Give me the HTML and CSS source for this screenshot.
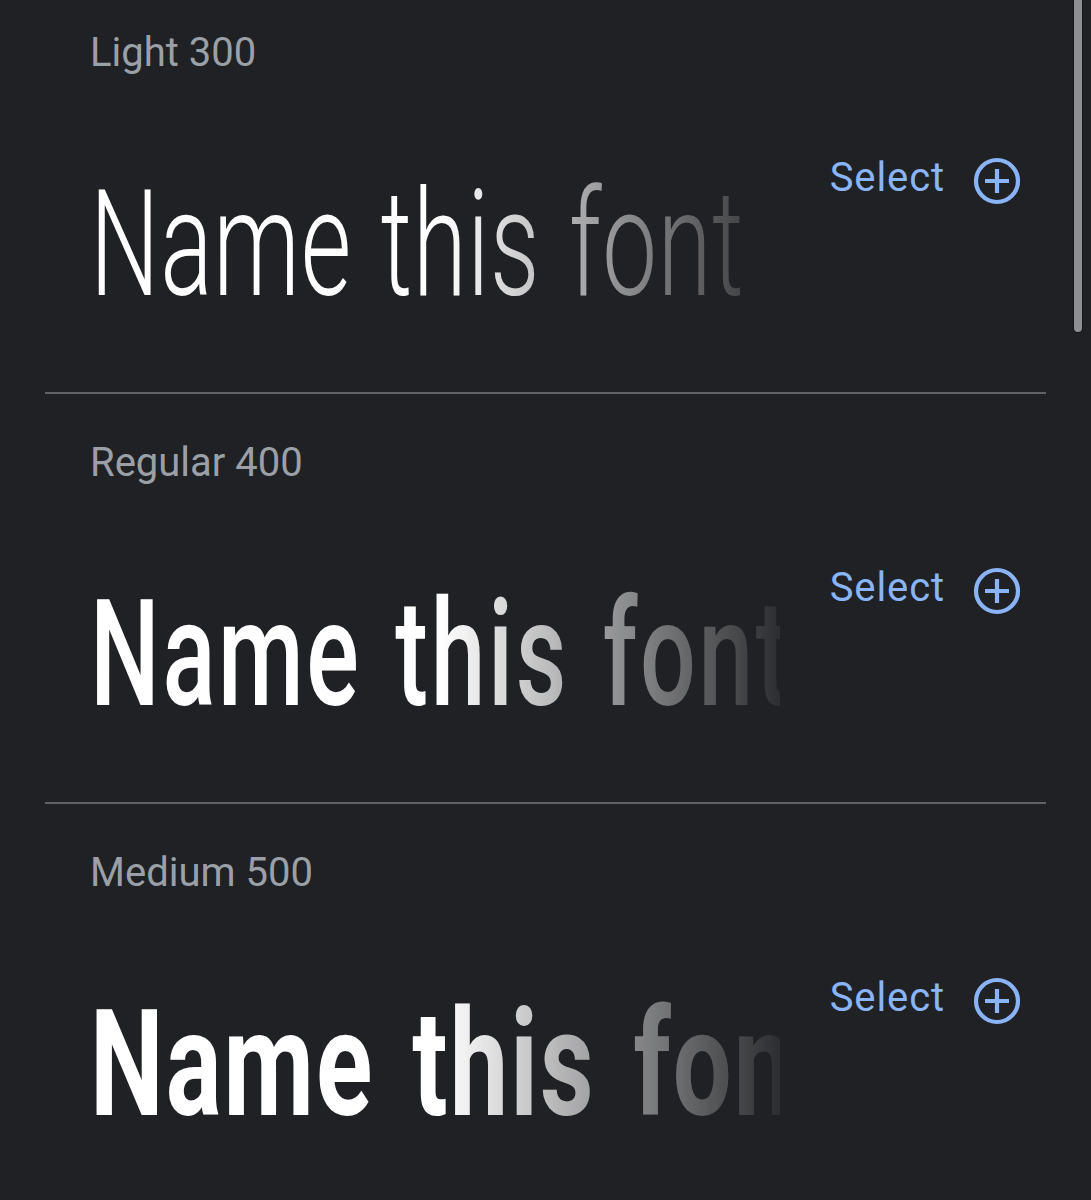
FILE: index.html
```html
<!DOCTYPE html>
<html lang="en">
<head>
<meta charset="utf-8">
<title>Styles</title>
<link rel="stylesheet" href="styles.css">
</head>
<body>
<div class="list">
  <section class="style">
    <div class="label">Light 300</div>
    <div class="row">
      <div class="sample"><span class="text w-light">Name this font</span></div>
      <button class="select" type="button">
        <span class="select-text">Select</span>
        <svg class="plus" width="48" height="48" viewBox="0 0 48 48" aria-hidden="true">
          <circle cx="24" cy="24" r="21" fill="none" stroke="currentColor" stroke-width="4.2"/>
          <path d="M24 12v24M12 24h24" fill="none" stroke="currentColor" stroke-width="4.2"/>
        </svg>
      </button>
    </div>
  </section>
  <section class="style">
    <div class="label">Regular 400</div>
    <div class="row">
      <div class="sample"><span class="text w-regular">Name this font</span></div>
      <button class="select" type="button">
        <span class="select-text">Select</span>
        <svg class="plus" width="48" height="48" viewBox="0 0 48 48" aria-hidden="true">
          <circle cx="24" cy="24" r="21" fill="none" stroke="currentColor" stroke-width="4.2"/>
          <path d="M24 12v24M12 24h24" fill="none" stroke="currentColor" stroke-width="4.2"/>
        </svg>
      </button>
    </div>
  </section>
  <section class="style">
    <div class="label">Medium 500</div>
    <div class="row">
      <div class="sample"><span class="text w-medium">Name this font</span></div>
      <button class="select" type="button">
        <span class="select-text">Select</span>
        <svg class="plus" width="48" height="48" viewBox="0 0 48 48" aria-hidden="true">
          <circle cx="24" cy="24" r="21" fill="none" stroke="currentColor" stroke-width="4.2"/>
          <path d="M24 12v24M12 24h24" fill="none" stroke="currentColor" stroke-width="4.2"/>
        </svg>
      </button>
    </div>
  </section>
</div>
<div class="scrollbar"></div>
</body>
</html>
```
FILE: styles.css
```css
html, body {
  margin: 0;
  padding: 0;
  background: #202124;
  height: 1200px;
  overflow: hidden;
  font-family: Roboto, "Noto Sans", Arial, sans-serif;
}

.list {
  margin: -18px 45px 0 45px;
}

.style {
  box-sizing: border-box;
  height: 410px;
  border-top: 2px solid #5f6368;
  padding: 45px 25px 0 45px;
}

.label {
  font-size: 40px;
  line-height: 48px;
  color: #9aa0a6;
  font-weight: 400;
}

.row {
  display: flex;
  justify-content: space-between;
  align-items: flex-start;
  margin-top: 77px;
}

.sample {
  width: 690px;
  height: 150px;
  margin-top: 15px;
  overflow: hidden;
  -webkit-mask-image: linear-gradient(90deg, #000 51%, rgba(0,0,0,0) 103%);
  mask-image: linear-gradient(90deg, #000 51%, rgba(0,0,0,0) 103%);
}

.text {
  display: inline-block;
  white-space: nowrap;
  font-family: Roboto, "Noto Sans", sans-serif;
  font-size: 149px;
  line-height: 150px;
  color: #ffffff;
  transform-origin: 0 0;
}

.w-light {
  font-weight: 300;
  letter-spacing: 1.3px;
  word-spacing: 6px;
  transform: scaleX(0.655);
}

.w-regular {
  font-weight: 500;
  letter-spacing: 4px;
  word-spacing: 10px;
  transform: scaleX(0.66);
}

.w-medium {
  font-weight: 700;
  letter-spacing: 3px;
  word-spacing: 14px;
  transform: scaleX(0.7);
}

.select {
  display: flex;
  align-items: flex-start;
  gap: 28px;
  background: none;
  border: 0;
  padding: 0;
  margin: 0;
  color: #8ab4f8;
  font-family: Roboto, "Noto Sans", sans-serif;
  cursor: pointer;
}

.select-text {
  font-size: 40px;
  line-height: 48px;
  font-weight: 400;
  letter-spacing: 0.9px;
}

.plus {
  display: block;
  margin-top: 3px;
}

.scrollbar {
  position: fixed;
  top: 0;
  right: 9px;
  width: 8px;
  height: 332px;
  background: #8e8f93;
  border-radius: 0 0 5px 5px;
  box-shadow: 0 0 0 1px #141518;
}
```
